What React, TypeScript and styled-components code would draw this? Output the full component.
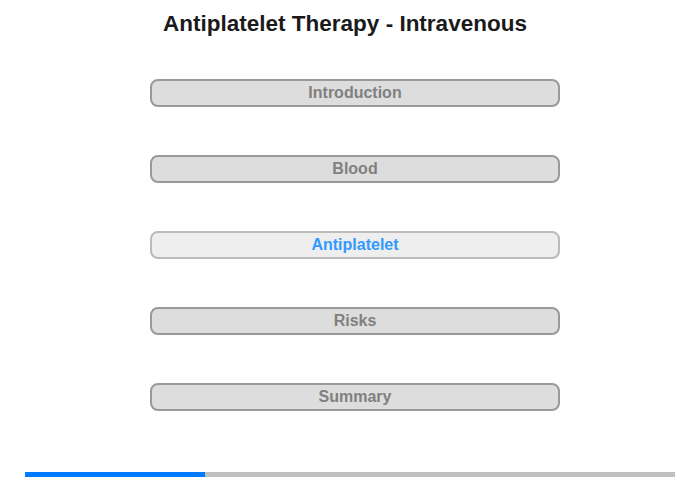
import styled, { createGlobalStyle } from "styled-components";

const menu = ["Introduction", "Blood", "Antiplatelet", "Risks", "Summary"];
const activeIndex = 2;
const progress = 0.277;

export default () => {
  return (
    <Page>
      <GlobalStyle />
      <Title>Antiplatelet Therapy - Intravenous</Title>
      <Menu>
        {menu.map((name, i) => (
          <MenuButton key={name} $active={i === activeIndex}>
            {name}
          </MenuButton>
        ))}
      </Menu>
      <Progress>
        <ProgressFill style={{ width: `${progress * 100}%` }} />
      </Progress>
    </Page>
  );
};

const GlobalStyle = createGlobalStyle`
  body {
    margin: 0;
    background: #fff;
    font-family: "Liberation Sans", Arial, sans-serif;
  }
`;

const Page = styled.div`
  width: 700px;
  height: 480px;
  display: flex;
  flex-direction: column;
  align-items: center;
`;

const Title = styled.h1`
  margin: 11px 0 0 -10px;
  font-size: 22.5px;
  line-height: 26px;
  font-weight: bold;
  color: #1a1a1a;
`;

const Menu = styled.div`
  margin-top: 42px;
  margin-left: 10px;
  display: flex;
  flex-direction: column;
  gap: 48px;
`;

const MenuButton = styled.div<{ $active: boolean }>`
  width: 406px;
  height: 24px;
  box-sizing: content-box;
  border: 2px solid ${p => (p.$active ? "#bbbbbb" : "#999999")};
  border-radius: 8px;
  background: ${p => (p.$active ? "#eeeeee" : "#dddddd")};
  color: ${p => (p.$active ? "#3399ff" : "#808080")};
  font-size: 16px;
  font-weight: bold;
  line-height: 24px;
  text-align: center;
`;

const Progress = styled.div`
  margin-top: auto;
  margin-bottom: 3px;
  width: 650px;
  height: 5px;
  background: #c0c0c0;
`;

const ProgressFill = styled.div`
  height: 100%;
  background: #007bff;
`;
